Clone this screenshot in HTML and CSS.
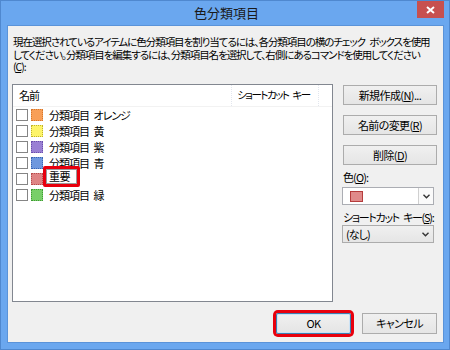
FILE: index.html
```html
<!DOCTYPE html>
<html lang="ja">
<head>
<meta charset="utf-8">
<title>色分類項目</title>
<link rel="stylesheet" href="styles.css">
</head>
<body>
<div class="window">
  <div class="titlebar">
    <div class="spacer"></div>
    <div class="title">色分類項目</div>
    <div class="close-wrap">
      <div class="close"><svg width="9" height="8" viewBox="0 0 9 8"><path d="M1 1 L8 7 M8 1 L1 7" stroke="#fff" stroke-width="2"/></svg></div>
    </div>
  </div>
  <div class="panel">
    <p class="desc"><span class="line">現在選択されているアイテムに色分類項目を割り当てるには、各分類項目の横のチェック ボックスを使用</span><span class="line">してください。分類項目を編集するには、分類項目名を選択して、右側にあるコマンドを使用してください</span><span class="line">(<u>C</u>):</span></p>
    <div class="main">
      <div class="listbox">
        <div class="header">
          <div class="col col-name">名前</div>
          <div class="col col-key">ショートカット キー</div>
          <div class="col col-rest"></div>
        </div>
        <div class="rows">
          <div class="row"><span class="check"></span><span class="swatch orange"></span><span class="label">分類項目 オレンジ</span></div>
          <div class="row"><span class="check"></span><span class="swatch yellow"></span><span class="label">分類項目 黄</span></div>
          <div class="row"><span class="check"></span><span class="swatch purple"></span><span class="label">分類項目 紫</span></div>
          <div class="row"><span class="check"></span><span class="swatch blue"></span><span class="label">分類項目 青</span></div>
          <div class="row"><span class="check"></span><span class="swatch red"></span><span class="edit">重要</span><span class="mark"></span></div>
          <div class="row"><span class="check"></span><span class="swatch green"></span><span class="label">分類項目 緑</span></div>
        </div>
      </div>
      <div class="side">
        <button class="btn side-btn">新規作成(<u>N</u>)...</button>
        <button class="btn side-btn">名前の変更(<u>R</u>)</button>
        <button class="btn side-btn">削除(<u>D</u>)</button>
        <div class="field-label">色(<u>O</u>):</div>
        <div class="combo color-combo">
          <span class="combo-value"><span class="color-box"></span></span>
          <span class="combo-arrow"><svg width="7" height="5" viewBox="0 0 7 5"><path d="M0.5 0.8 L3.5 3.8 L6.5 0.8" fill="none" stroke="#333" stroke-width="1.4"/></svg></span>
        </div>
        <div class="field-label key-label">ショートカット キー(<u>S</u>):</div>
        <div class="combo key-combo">
          <span class="combo-value">(なし)</span>
          <span class="key-arrow"><svg width="7" height="5" viewBox="0 0 7 5"><path d="M0.5 0.8 L3.5 3.8 L6.5 0.8" fill="none" stroke="#333" stroke-width="1.4"/></svg></span>
        </div>
      </div>
    </div>
    <div class="footer">
      <button class="btn ok">OK</button>
      <button class="btn cancel">キャンセル</button>
    </div>
  </div>
</div>
</body>
</html>
```

FILE: styles.css
```css
* { box-sizing: border-box; }
html, body { margin: 0; padding: 0; }
body {
  font-family: "Noto Sans CJK JP", "Noto Sans", sans-serif;
  font-size: 11px;
  color: #000;
  width: 450px;
  height: 350px;
  overflow: hidden;
  letter-spacing: -0.9px;
  word-spacing: 3px;
  font-feature-settings: "palt";
}
u { text-decoration: underline; text-underline-offset: 1px; }
.window {
  width: 450px;
  height: 350px;
  background: #6aa7ef;
  border: 1px solid #4f88cf;
  padding: 0 5px 6px 6px;
  display: flex;
  flex-direction: column;
}
.titlebar {
  height: 24px;
  display: grid;
  grid-template-columns: 1fr auto 1fr;
  align-items: start;
}
.title {
  font-size: 13px;
  line-height: 24px;
  color: #1a1a1a;
  padding-left: 2px;
  letter-spacing: 0;
  font-feature-settings: normal;
}
.close-wrap { display: flex; justify-content: flex-end; }
.close {
  width: 27px;
  height: 17px;
  background: #c7504f;
  display: flex;
  align-items: center;
  justify-content: center;
}
.panel {
  flex: 1;
  background: #f0f0f0;
  border: 1px solid #5a93d9;
  padding: 10px 6px 0 4px;
  display: flex;
  flex-direction: column;
}
.desc {
  margin: 0;
  padding-left: 1px;
  height: 38px;
  display: flex;
  flex-direction: column;
  font-size: 10.5px;
  letter-spacing: -1.05px;
}
.line {
  display: block;
  height: 12.5px;
  line-height: 12.5px;
  white-space: nowrap;
}
.main {
  margin-top: 10px;
  display: flex;
  gap: 9px;
  height: 218px;
}
.listbox {
  width: 324px;
  height: 218px;
  background: #fff;
  border: 1px solid #828790;
  display: flex;
  flex-direction: column;
}
.header {
  height: 22px;
  display: flex;
  border-bottom: 1px solid #f2f2f2;
  flex: none;
}
.col {
  height: 21px;
  line-height: 20px;
  border-right: 1px dotted #e2e6ee;
  white-space: nowrap;
  overflow: hidden;
}
.col-name { width: 219px; padding-left: 6px; }
.col-key { width: 87px; padding-left: 5px; font-size: 10.5px; letter-spacing: -1.5px; }
.col-rest { flex: 1; border-right: none; }
.rows { display: flex; flex-direction: column; }
.row {
  height: 16px;
  display: flex;
  align-items: center;
  padding-left: 3px;
  position: relative;
}
.check {
  width: 12px;
  height: 12px;
  border: 1px solid #858585;
  background: #fff;
  flex: none;
}
.swatch {
  width: 12px;
  height: 12px;
  margin-left: 3px;
  border: 1px dotted;
  flex: none;
}
.orange { background: #f89f58; border-color: #d5772c; }
.yellow { background: #fdf469; border-color: #bfb22c; }
.purple { background: #9a80d4; border-color: #6b4fab; }
.blue { background: #6e98de; border-color: #3b66b2; }
.red { background: #de8484; border-color: #b54c4c; }
.green { background: #78cf69; border-color: #3f9a34; }
.label {
  margin-left: 6px;
  white-space: nowrap;
  letter-spacing: -1px;
}
.edit {
  margin-left: 3px;
  height: 15px;
  width: 31px;
  border: 1px solid #9a9a9a;
  background: #fff;
  padding-left: 2px;
  line-height: 13px;
  align-self: flex-start;
  margin-top: -2px;
  letter-spacing: -0.5px;
  white-space: nowrap;
}
.mark {
  position: absolute;
  left: 30px;
  top: -5px;
  width: 37px;
  height: 21px;
  border: 3px solid #e8000d;
  border-radius: 2px;
}
.side {
  width: 95px;
  display: flex;
  flex-direction: column;
  padding-top: 1px;
}
.btn {
  font-family: inherit;
  font-size: 11px;
  letter-spacing: -0.6px;
  font-feature-settings: "palt";
  color: #000;
  background: linear-gradient(#f0f0f0, #e5e5e5);
  border: 1px solid #acacac;
  border-radius: 0;
  padding: 0;
  line-height: 1;
}
.side-btn {
  width: 94px;
  height: 20px;
  margin-left: 1px;
  margin-bottom: 10px;
}
.side-btn:nth-of-type(3) { margin-bottom: 4px; }
.field-label {
  height: 16px;
  line-height: 16px;
  padding-left: 1px;
  white-space: nowrap;
}
.key-label { letter-spacing: -1.3px; }
.combo {
  width: 92px;
  height: 18px;
  display: flex;
  margin-top: 2px;
  margin-bottom: 4px;
}
.color-combo {
  background: #fff;
  border: 1px solid #abadb3;
}
.color-combo .combo-value { flex: 1; display: flex; align-items: center; padding-left: 7px; }
.color-box {
  width: 13px;
  height: 11px;
  background: #e08a8a;
  border: 1px solid #b53c3c;
}
.combo-arrow {
  width: 15px;
  border-left: 1px solid #d0d0d0;
  background: #fafafa;
  display: flex;
  align-items: center;
  justify-content: center;
}
.key-combo {
  margin-top: 0;
  background: linear-gradient(#f0f0f0, #e5e5e5);
  border: 1px solid #acacac;
  align-items: center;
}
.key-combo .combo-value { flex: 1; padding-left: 3px; }
.key-arrow { width: 15px; display: flex; justify-content: center; }
.footer {
  margin-top: 11px;
  display: flex;
  justify-content: flex-end;
  gap: 11px;
}
.footer .btn { width: 75px; height: 21px; }
.ok {
  border-color: #3c7fb1;
  box-shadow: inset 0 0 0 1px #cde3f5, 0 0 0 3px #e8000d;
  border-radius: 2px;
}
```
